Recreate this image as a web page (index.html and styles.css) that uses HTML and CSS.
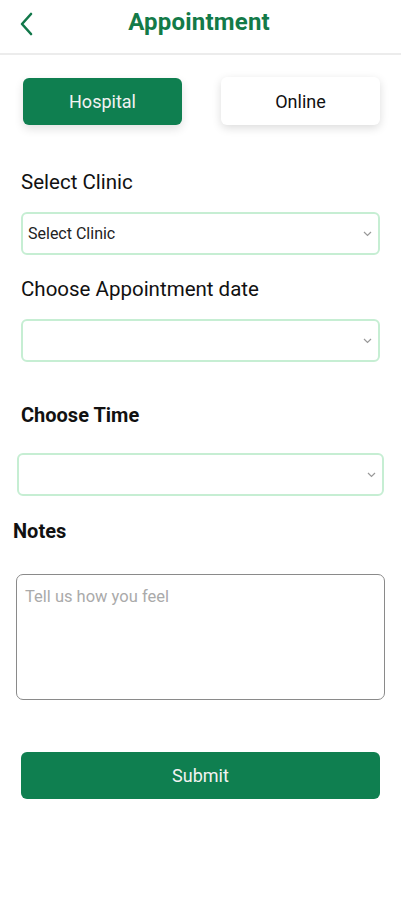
FILE: index.html
```html
<!DOCTYPE html>
<html lang="en">

<head>
    <meta charset="UTF-8">
    <meta name="viewport" content="width=device-width, initial-scale=1.0">
    <title>Appointment</title>
    <link rel="stylesheet" href="styles.css">
</head>

<body>
    <div class="header">
        <a class="back" href="#">
            <svg width="14" height="24" viewBox="0 0 14 24">
                <path d="M12 2 L3 12 L12 22" fill="none" stroke="#12784a" stroke-width="2.6" stroke-linecap="round" stroke-linejoin="round" />
            </svg>
        </a>
        <h1>Appointment</h1>
    </div>

    <div class="tabs">
        <button class="tab active">Hospital</button>
        <button class="tab">Online</button>
    </div>

    <form class="form">
        <label class="label">Select Clinic</label>
        <div class="select first">
            <span>Select Clinic</span>
            <svg class="arrow" width="9" height="6" viewBox="0 0 9 6"><path d="M1 1 L4.5 4.5 L8 1" fill="none" stroke="#999" stroke-width="1.2" /></svg>
        </div>

        <label class="label date-label">Choose Appointment date</label>
        <div class="select second">
            <span></span>
            <svg class="arrow" width="9" height="6" viewBox="0 0 9 6"><path d="M1 1 L4.5 4.5 L8 1" fill="none" stroke="#999" stroke-width="1.2" /></svg>
        </div>

        <label class="label time-label">Choose Time</label>
        <div class="select wide">
            <span></span>
            <svg class="arrow" width="9" height="6" viewBox="0 0 9 6"><path d="M1 1 L4.5 4.5 L8 1" fill="none" stroke="#999" stroke-width="1.2" /></svg>
        </div>

        <label class="label notes-label">Notes</label>
        <textarea class="notes" placeholder="Tell us how you feel"></textarea>

        <button type="button" class="submit">Submit</button>
    </form>
</body>

</html>
```

FILE: styles.css
```css
* {
    padding: 0;
    margin: 0;
    box-sizing: border-box;
}

body {
    font-family: Roboto, "Liberation Sans", sans-serif;
    background: #fff;
    color: #111;
    width: 401px;
}

.header {
    position: relative;
    height: 55px;
    border-bottom: 2px solid #ececec;
    display: flex;
    align-items: center;
    justify-content: center;
}

.header h1 {
    font-size: 24px;
    font-weight: 700;
    color: #137a48;
    margin-top: -10px;
    margin-left: -3px;
    letter-spacing: 0.2px;
}

.back {
    position: absolute;
    left: 19px;
    top: 12px;
    display: block;
    width: 14px;
    height: 24px;
}

.tabs {
    display: flex;
    justify-content: space-between;
    padding: 22px 21px 0 23px;
}

.tab {
    width: 159px;
    height: 48px;
    border: none;
    border-radius: 6px;
    background: #fff;
    font-family: Roboto, "Liberation Sans", sans-serif;
    font-size: 18px;
    color: #111;
    box-shadow: 0 3px 10px rgba(0, 0, 0, 0.14);
}

.tab.active {
    background: #0f7f50;
    color: #f2f2f2;
    height: 47px;
    margin-top: 1px;
    box-shadow: 0 4px 10px rgba(0, 0, 0, 0.12);
}

.form {
    display: flex;
    flex-direction: column;
    padding: 0 21px;
}

.label {
    font-size: 20.5px;
    font-weight: 400;
    color: #111;
    line-height: 24px;
    margin-top: 45px;
}

.select {
    display: flex;
    align-items: center;
    justify-content: space-between;
    height: 43px;
    border: 2px solid #c6eed3;
    border-radius: 6px;
    padding: 0 5px 0 5px;
    font-size: 16px;
    color: #222;
}

.select.first {
    margin-top: 18px;
}

.select.second {
    margin-top: 18px;
}

.date-label {
    margin-top: 22px;
}

.arrow {
    display: block;
    margin-right: 1px;
}

.time-label {
    margin-top: 41px;
    font-size: 20px;
    font-weight: 700;
}

.select.wide {
    margin: 26px -4px 0;
}

.notes-label {
    margin-left: -8px;
    margin-top: 23px;
    font-size: 20px;
    font-weight: 700;
}

.notes {
    margin: 31px -5px 0 -5px;
    height: 126px;
    border: 1px solid #8a8a8a;
    border-radius: 7px;
    padding: 12px 8px;
    font-family: Roboto, "Liberation Sans", sans-serif;
    font-size: 16.5px;
    resize: none;
    outline: none;
}

.notes::placeholder {
    color: #aaa;
}

.submit {
    margin-top: 52px;
    height: 47px;
    border: none;
    border-radius: 6px;
    background: #0f7f50;
    color: #f2f2f2;
    font-family: Roboto, "Liberation Sans", sans-serif;
    font-size: 18px;
}
```
